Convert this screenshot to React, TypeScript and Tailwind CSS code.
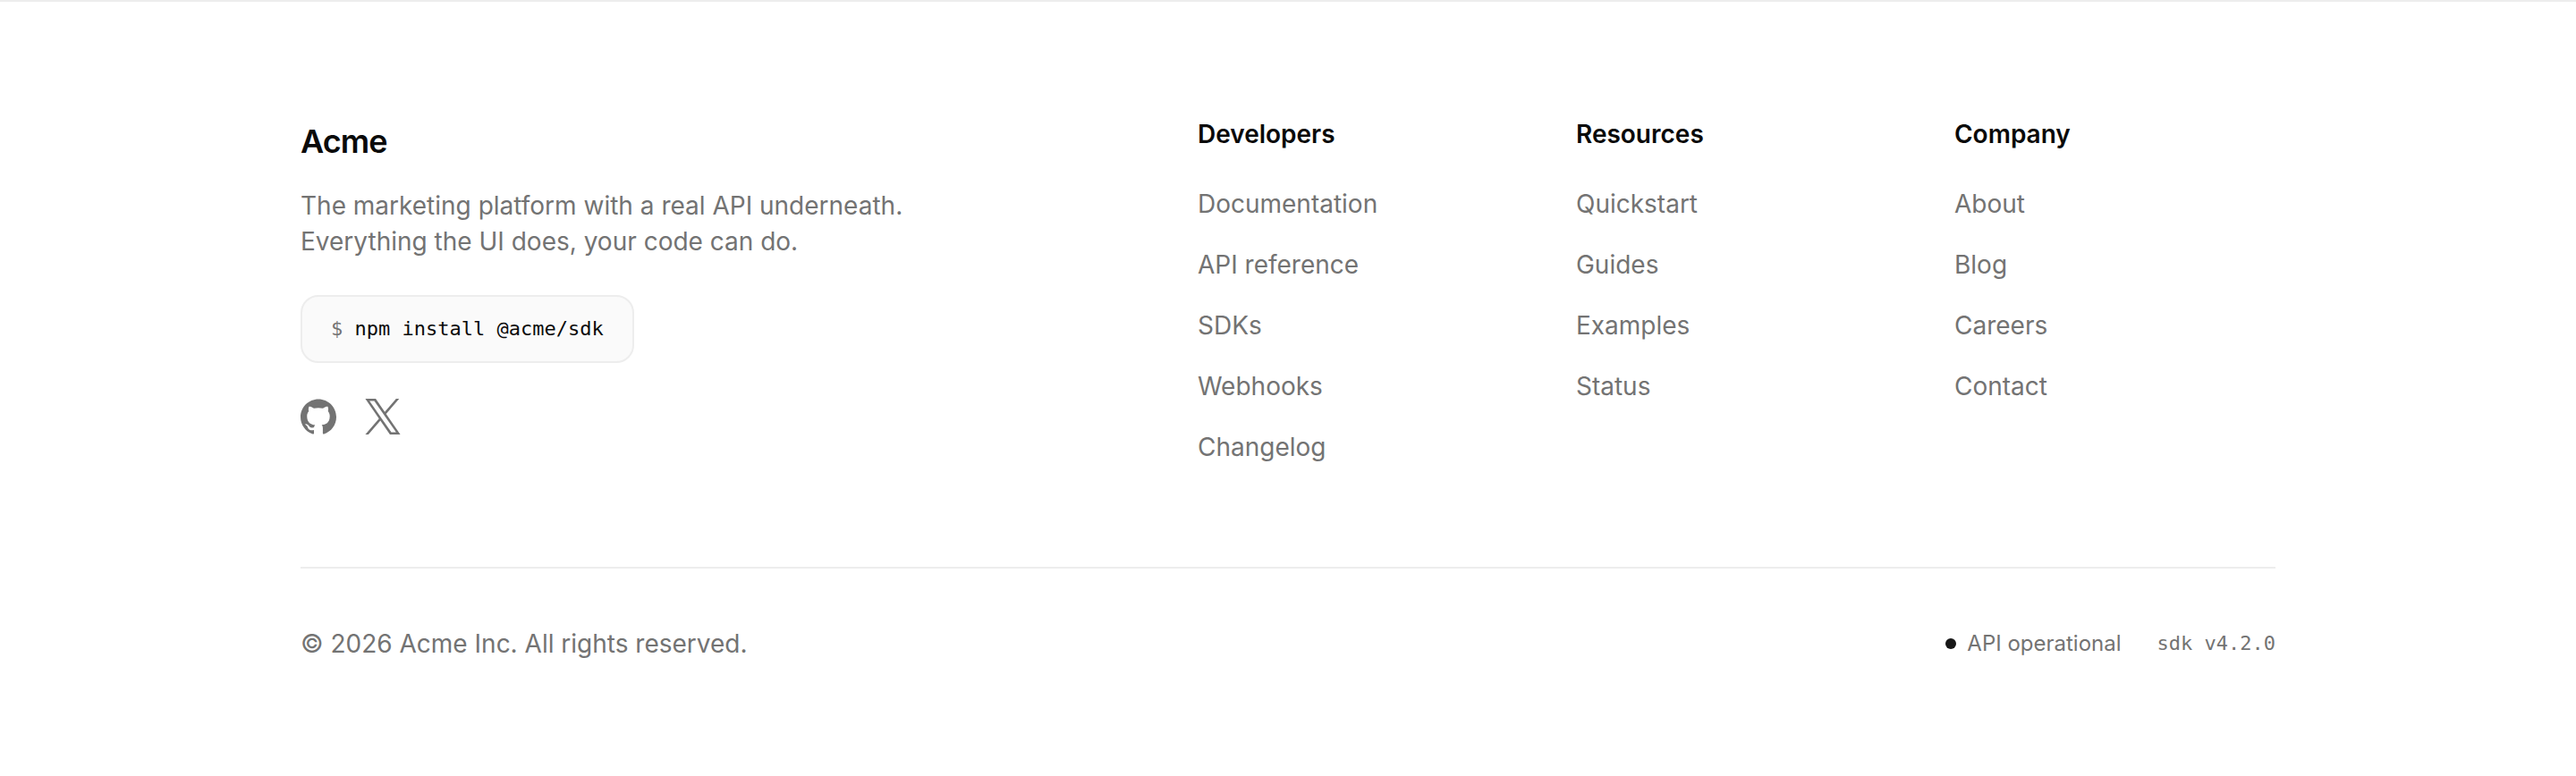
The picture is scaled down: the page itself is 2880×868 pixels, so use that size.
type LinkGroup = {
  title: string;
  links: string[];
};

const groups: LinkGroup[] = [
  {
    title: "Developers",
    links: ["Documentation", "API reference", "SDKs", "Webhooks", "Changelog"],
  },
  {
    title: "Resources",
    links: ["Quickstart", "Guides", "Examples", "Status"],
  },
  {
    title: "Company",
    links: ["About", "Blog", "Careers", "Contact"],
  },
];

function GitHubIcon() {
  return (
    <svg viewBox="0 0 24 24" fill="currentColor" className="size-10" aria-hidden="true">
      <path d="M12 .297c-6.63 0-12 5.373-12 12 0 5.303 3.438 9.8 8.205 11.385.6.113.82-.258.82-.577 0-.285-.01-1.04-.015-2.04-3.338.724-4.042-1.61-4.042-1.61C4.422 18.07 3.633 17.7 3.633 17.7c-1.087-.744.084-.729.084-.729 1.205.084 1.838 1.236 1.838 1.236 1.07 1.835 2.809 1.305 3.495.998.108-.776.417-1.305.76-1.605-2.665-.3-5.466-1.332-5.466-5.93 0-1.31.465-2.38 1.235-3.22-.135-.303-.54-1.523.105-3.176 0 0 1.005-.322 3.3 1.23.96-.267 1.98-.399 3-.405 1.02.006 2.04.138 3 .405 2.28-1.552 3.285-1.23 3.285-1.23.645 1.653.24 2.873.12 3.176.765.84 1.23 1.91 1.23 3.22 0 4.61-2.805 5.625-5.475 5.92.42.36.81 1.096.81 2.22 0 1.606-.015 2.896-.015 3.286 0 .315.21.69.825.57C20.565 22.092 24 17.592 24 12.297c0-6.627-5.373-12-12-12" />
    </svg>
  );
}

function XIcon() {
  return (
    <svg viewBox="0 0 24 24" fill="currentColor" className="size-10" aria-hidden="true">
      <path d="M14.234 10.162 22.977 0h-2.072l-7.591 8.824L7.251 0H.258l9.168 13.343L.258 24H2.33l8.016-9.318L16.749 24h6.993zm-2.837 3.299-.929-1.329L3.076 1.56h3.182l5.965 8.532.929 1.329 7.754 11.09h-3.182z" />
    </svg>
  );
}

export default function App() {
  return (
    <footer className="border-t-2 border-[#ededed] bg-white font-[Inter,sans-serif] text-[#737373]">
      <div className="max-w-[2304px] mx-auto px-12 py-32">
        <div className="grid grid-cols-1 lg:grid-cols-[34fr_13fr_13fr_13fr] gap-16">
          {/* Brand */}
          <div>
            <a href="#" className="block w-fit text-[36px] leading-14 font-semibold tracking-tight text-[#0a0a0a]">
              Acme
            </a>
            <p className="mt-6 max-w-[704px] text-[28px] leading-10">
              The marketing platform with a real API underneath. Everything the
              UI does, your code can do.
            </p>
            <code className="mt-10 block w-fit rounded-[20px] border-2 border-[#ededed] bg-[#fafafa] px-8 py-5 font-['DejaVu_Sans_Mono',monospace] text-[22px] leading-8 text-[#0a0a0a]">
              <span className="text-[#737373]">$</span> npm install @acme/sdk
            </code>
            <div className="mt-10 flex gap-8">
              <a href="#" aria-label="GitHub" className="hover:text-[#0a0a0a]"><GitHubIcon /></a>
              <a href="#" aria-label="X" className="hover:text-[#0a0a0a]"><XIcon /></a>
            </div>
          </div>

          {/* Links */}
          {groups.map((group) => (
            <nav key={group.title} aria-label={group.title} className="text-[28px] leading-10">
              <h3 className="font-semibold text-[#0a0a0a]">{group.title}</h3>
              <ul className="mt-[38px] space-y-7">
                {group.links.map((link) => (
                  <li key={link}>
                    <a href="#" className="hover:text-[#0a0a0a]">{link}</a>
                  </li>
                ))}
              </ul>
            </nav>
          ))}
        </div>

        <div className="mt-[114px] flex flex-wrap items-center justify-between gap-8 border-t-2 border-[#ededed] pt-16">
          <p className="text-[28px] leading-10">
            &copy; 2026 Acme Inc. All rights reserved.
          </p>
          <div className="flex items-center gap-10 text-2xl">
            <span className="flex items-center gap-3">
              <span className="size-3 rounded-full bg-[#171717]" />
              API operational
            </span>
            <span className="font-['DejaVu_Sans_Mono',monospace] text-[22px]">sdk v4.2.0</span>
          </div>
        </div>
      </div>
    </footer>
  );
}
